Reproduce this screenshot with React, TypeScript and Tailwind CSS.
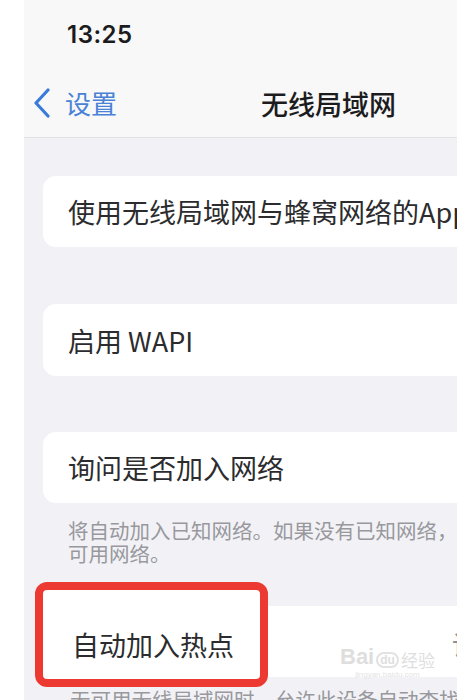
import React from "react";

const cjk = { fontFamily: '"Noto Sans CJK SC", "Noto Sans", sans-serif' };

export default function App() {
  return (
    <div className="w-[457px] h-[700px] overflow-hidden bg-white flex" style={cjk}>
      <div className="w-[24px] shrink-0 bg-white" />
      <div className="flex-1 flex flex-col bg-[#f2f2f6] min-w-0">
        {/* Header */}
        <div className="h-[138px] shrink-0 bg-[#f8f8f8] border-b border-[#e2e2e4] flex flex-col">
          <div className="h-[80px] pl-[43px] pt-[23px]">
            <span
              className="text-[24px] font-semibold text-[#1c1c1e] leading-none tracking-[0.5px]"
              style={{ fontFamily: 'Inter, "Liberation Sans", sans-serif' }}
            >
              13:25
            </span>
          </div>
          <div className="flex items-center h-[46px] pl-[8px]">
            <svg width="20" height="30" viewBox="0 0 20 30" className="shrink-0">
              <path d="M16 2 L4 15 L16 28" fill="none" stroke="#3a7ad8" strokeWidth="3.2" strokeLinecap="round" strokeLinejoin="round" />
            </svg>
            <span className="ml-[13px] text-[26px] text-[#4a82d6] leading-none">设置</span>
            <span className="ml-[144px] text-[27px] font-medium text-[#1c1c1e] leading-none whitespace-nowrap">无线局域网</span>
          </div>
        </div>

        {/* Body */}
        <div className="flex flex-col pl-[19px] mr-[-30px]">
          <div className="mt-[38px] h-[71px] bg-white rounded-l-[13px] flex items-center pl-[25px] overflow-hidden">
            <span className="text-[27px] text-[#2c2c2e] whitespace-nowrap leading-none">使用无线局域网与蜂窝网络的App</span>
          </div>

          <div className="mt-[57px] h-[72px] bg-white rounded-l-[13px] flex items-center pl-[25px]">
            <span className="text-[27px] text-[#2c2c2e] whitespace-nowrap leading-none">启用 WAPI</span>
          </div>

          <div className="mt-[56px] h-[71px] bg-white rounded-l-[13px] flex items-center pl-[25px]">
            <span className="text-[27px] text-[#2c2c2e] whitespace-nowrap leading-none">询问是否加入网络</span>
          </div>

          <div className="pl-[25px] pt-[16px] text-[20.5px] text-[#98989d] whitespace-nowrap flex flex-col">
            <div className="h-[23px] leading-[23px]">将自动加入已知网络。如果没有已知网络，</div>
            <div className="h-[23px] leading-[23px]">可用网络。</div>
          </div>

          <div className="relative mt-[41px] h-[71px] bg-white flex items-start pt-[25px] pl-[29px]">
            <div className="absolute left-[-8px] top-[-24px] w-[233px] h-[105px] bg-white border-[8px] border-[#ec3a32] rounded-[12px]" />
            <span className="relative z-10 text-[27px] text-[#2c2c2e] whitespace-nowrap leading-none">自动加入热点</span>
            <span className="absolute left-[409px] top-[25px] text-[27px] text-[#8e8e93] whitespace-nowrap leading-none">询问</span>
            <div className="absolute left-[297px] top-[40px] flex flex-col items-center pointer-events-none">
              <div className="flex items-end gap-[2px] text-[#dedede] leading-none">
                <span className="text-[22px] font-bold" style={{ fontFamily: '"Liberation Sans", sans-serif' }}>Bai</span>
                <span className="text-[12px] font-bold rounded-full border-2 border-[#e2e2e2] px-[2px]" style={{ fontFamily: '"Liberation Sans", sans-serif' }}>du</span>
                <span className="text-[17px]">经验</span>
              </div>
              <span className="text-[8px] text-[#e4e4e4] leading-none mt-[3px]" style={{ fontFamily: '"Liberation Sans", sans-serif' }}>jingyan.baidu.com</span>
            </div>
          </div>

          <div className="pl-[27px] pt-[11px] text-[20.5px] leading-[23px] text-[#98989d] whitespace-nowrap">
            无可用无线局域网时，允许此设备自动查找
          </div>
        </div>
      </div>
    </div>
  );
}
